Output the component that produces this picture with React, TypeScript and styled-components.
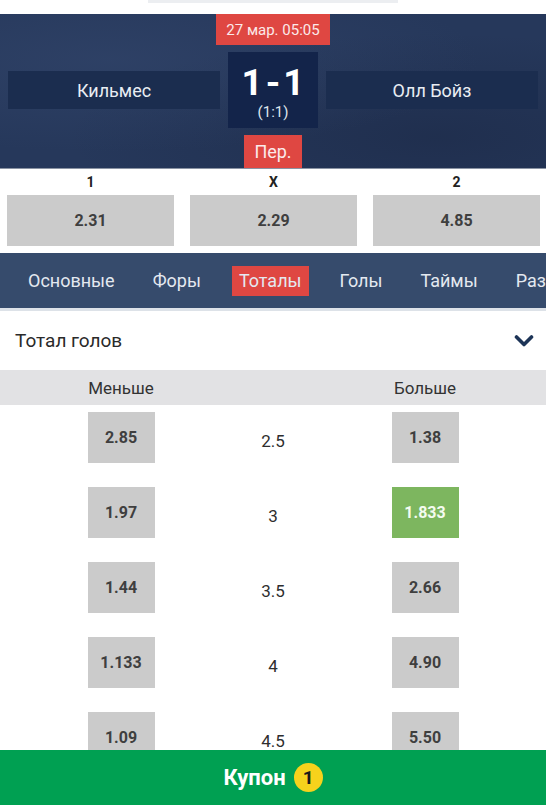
import React from "react";
import styled, { createGlobalStyle } from "styled-components";

const GlobalStyle = createGlobalStyle`
  html, body {
    margin: 0;
    padding: 0;
    background: #ffffff;
    font-family: Roboto, "Noto Sans", "Liberation Sans", sans-serif;
  }
  * {
    box-sizing: border-box;
  }
`;

const Page = styled.div`
  width: 546px;
  height: 805px;
  display: flex;
  flex-direction: column;
  overflow: hidden;
  background: #ffffff;
`;

const Content = styled.div`
  flex: 1;
  overflow: hidden;
`;

const TopStrip = styled.div`
  height: 14px;
  display: flex;
  justify-content: center;
`;

const TopShadow = styled.div`
  width: 250px;
  height: 3px;
  background: #eceef1;
`;

const MatchHeader = styled.div`
  height: 155px;
  padding: 0 8px;
  display: flex;
  flex-direction: column;
  align-items: center;
  background:
    radial-gradient(ellipse at 20% 30%, rgba(60, 80, 120, 0.35), transparent 60%),
    radial-gradient(ellipse at 80% 80%, rgba(20, 30, 55, 0.35), transparent 60%),
    #26385b;
  border-bottom: 1px solid #8a93a3;
`;

const RedBadge = styled.div<{ $size: number; $height: number }>`
  height: ${(p) => p.$height}px;
  padding: 0 10px;
  display: flex;
  align-items: center;
  justify-content: center;
  background: #df4742;
  color: #fbeaea;
  font-size: ${(p) => p.$size}px;
`;

const ScoreRow = styled.div`
  width: 100%;
  margin: 7px 0 7px;
  display: flex;
  align-items: center;
  gap: 8px;
`;

const TeamBar = styled.div`
  flex: 1;
  height: 38px;
  display: flex;
  align-items: center;
  justify-content: center;
  background: #1b2d4f;
  color: #e9edf3;
  font-size: 18px;
`;

const ScoreBox = styled.div`
  width: 90px;
  height: 76px;
  padding-top: 2px;
  display: flex;
  flex-direction: column;
  align-items: center;
  justify-content: center;
  background: #13244a;
  color: #ffffff;
`;

const ScoreMain = styled.div`
  font-size: 37px;
  font-weight: 700;
  line-height: 42px;
  letter-spacing: 3px;
  margin-right: -3px;
`;

const ScoreSub = styled.div`
  font-size: 15px;
  line-height: 17px;
  color: #dfe4ec;
`;

const OddsSection = styled.div`
  padding: 5px 6px 7px 7px;
  display: grid;
  grid-template-columns: repeat(3, 1fr);
  column-gap: 16px;
`;

const OddsLabel = styled.div`
  height: 21px;
  text-align: center;
  font-size: 14px;
  font-weight: 700;
  color: #222;
`;

const OddButton = styled.div<{ $w?: number; $active?: boolean }>`
  ${(p) => (p.$w ? `width: ${p.$w}px;` : "")}
  height: 51px;
  display: flex;
  align-items: center;
  justify-content: center;
  background: ${(p) => (p.$active ? "#7db65f" : "#cbcbcb")};
  color: ${(p) => (p.$active ? "#f4fbf0" : "#3f3f3f")};
  font-size: 16px;
  font-weight: 700;
`;

const Tabs = styled.div`
  height: 58px;
  padding-left: 21px;
  display: flex;
  align-items: center;
  gap: 24px;
  background: #364b6c;
  border-bottom: 3px solid #dde2e8;
  white-space: nowrap;
  overflow: hidden;
`;

const Tab = styled.div<{ $active?: boolean }>`
  height: 30px;
  padding: 0 7px;
  display: flex;
  align-items: center;
  font-size: 18px;
  color: #e4e9f0;
  background: ${(p) => (p.$active ? "#df4742" : "transparent")};
`;

const SectionTitle = styled.div`
  height: 59px;
  padding: 0 12px 0 15px;
  display: flex;
  align-items: center;
  justify-content: space-between;
  font-size: 19px;
  color: #2a2a2a;
`;

const GridRow = styled.div`
  padding: 0 45px;
  display: grid;
  grid-template-columns: repeat(3, 1fr);
  justify-items: center;
  align-items: center;
`;

const ColumnHeader = styled(GridRow)`
  height: 35px;
  background: #e2e2e4;
  font-size: 17px;
  color: #333;
`;

const LineRow = styled(GridRow)`
  height: 75px;
  padding-top: 7px;
  align-items: start;
`;

const LineValue = styled.div`
  height: 51px;
  padding-top: 6px;
  display: flex;
  align-items: center;
  font-size: 17px;
  color: #2e2e2e;
`;

const Footer = styled.div`
  height: 55px;
  display: flex;
  align-items: center;
  justify-content: center;
  gap: 8px;
  background: #00a052;
  color: #ffffff;
  font-size: 22px;
  font-weight: 700;
`;

const CountBadge = styled.div`
  width: 29px;
  height: 29px;
  border-radius: 50%;
  display: flex;
  align-items: center;
  justify-content: center;
  background: #f6d21c;
  color: #1a1a1a;
  font-size: 19px;
  font-weight: 700;
`;

const lines = [
  { under: "2.85", total: "2.5", over: "1.38" },
  { under: "1.97", total: "3", over: "1.833", picked: true },
  { under: "1.44", total: "3.5", over: "2.66" },
  { under: "1.133", total: "4", over: "4.90" },
  { under: "1.09", total: "4.5", over: "5.50" },
];

const tabs = ["Основные", "Форы", "Тоталы", "Голы", "Таймы", "Разница"];

const Chevron = () => (
  <svg width="20" height="14" viewBox="0 0 20 14">
    <polyline
      points="2.5,3 10,10.5 17.5,3"
      fill="none"
      stroke="#1d3457"
      strokeWidth="3.6"
      strokeLinecap="round"
      strokeLinejoin="round"
    />
  </svg>
);

const App = () => {
  return (
    <Page>
      <GlobalStyle />
      <Content>
        <TopStrip>
          <TopShadow />
        </TopStrip>
        <MatchHeader>
          <RedBadge $size={15} $height={31}>
            27 мар. 05:05
          </RedBadge>
          <ScoreRow>
            <TeamBar>Кильмес</TeamBar>
            <ScoreBox>
              <ScoreMain>1-1</ScoreMain>
              <ScoreSub>(1:1)</ScoreSub>
            </ScoreBox>
            <TeamBar>Олл Бойз</TeamBar>
          </ScoreRow>
          <RedBadge $size={18} $height={33}>
            Пер.
          </RedBadge>
        </MatchHeader>

        <OddsSection>
          <OddsLabel>1</OddsLabel>
          <OddsLabel>X</OddsLabel>
          <OddsLabel>2</OddsLabel>
          <OddButton>2.31</OddButton>
          <OddButton>2.29</OddButton>
          <OddButton>4.85</OddButton>
        </OddsSection>

        <Tabs>
          {tabs.map((t) => (
            <Tab key={t} $active={t === "Тоталы"}>
              {t}
            </Tab>
          ))}
        </Tabs>

        <SectionTitle>
          Тотал голов
          <Chevron />
        </SectionTitle>

        <ColumnHeader>
          <span>Меньше</span>
          <span />
          <span>Больше</span>
        </ColumnHeader>

        {lines.map((l) => (
          <LineRow key={l.total}>
            <OddButton $w={67}>{l.under}</OddButton>
            <LineValue>{l.total}</LineValue>
            <OddButton $w={67} $active={l.picked}>
              {l.over}
            </OddButton>
          </LineRow>
        ))}
      </Content>
      <Footer>
        Купон
        <CountBadge>1</CountBadge>
      </Footer>
    </Page>
  );
};

export default App;
